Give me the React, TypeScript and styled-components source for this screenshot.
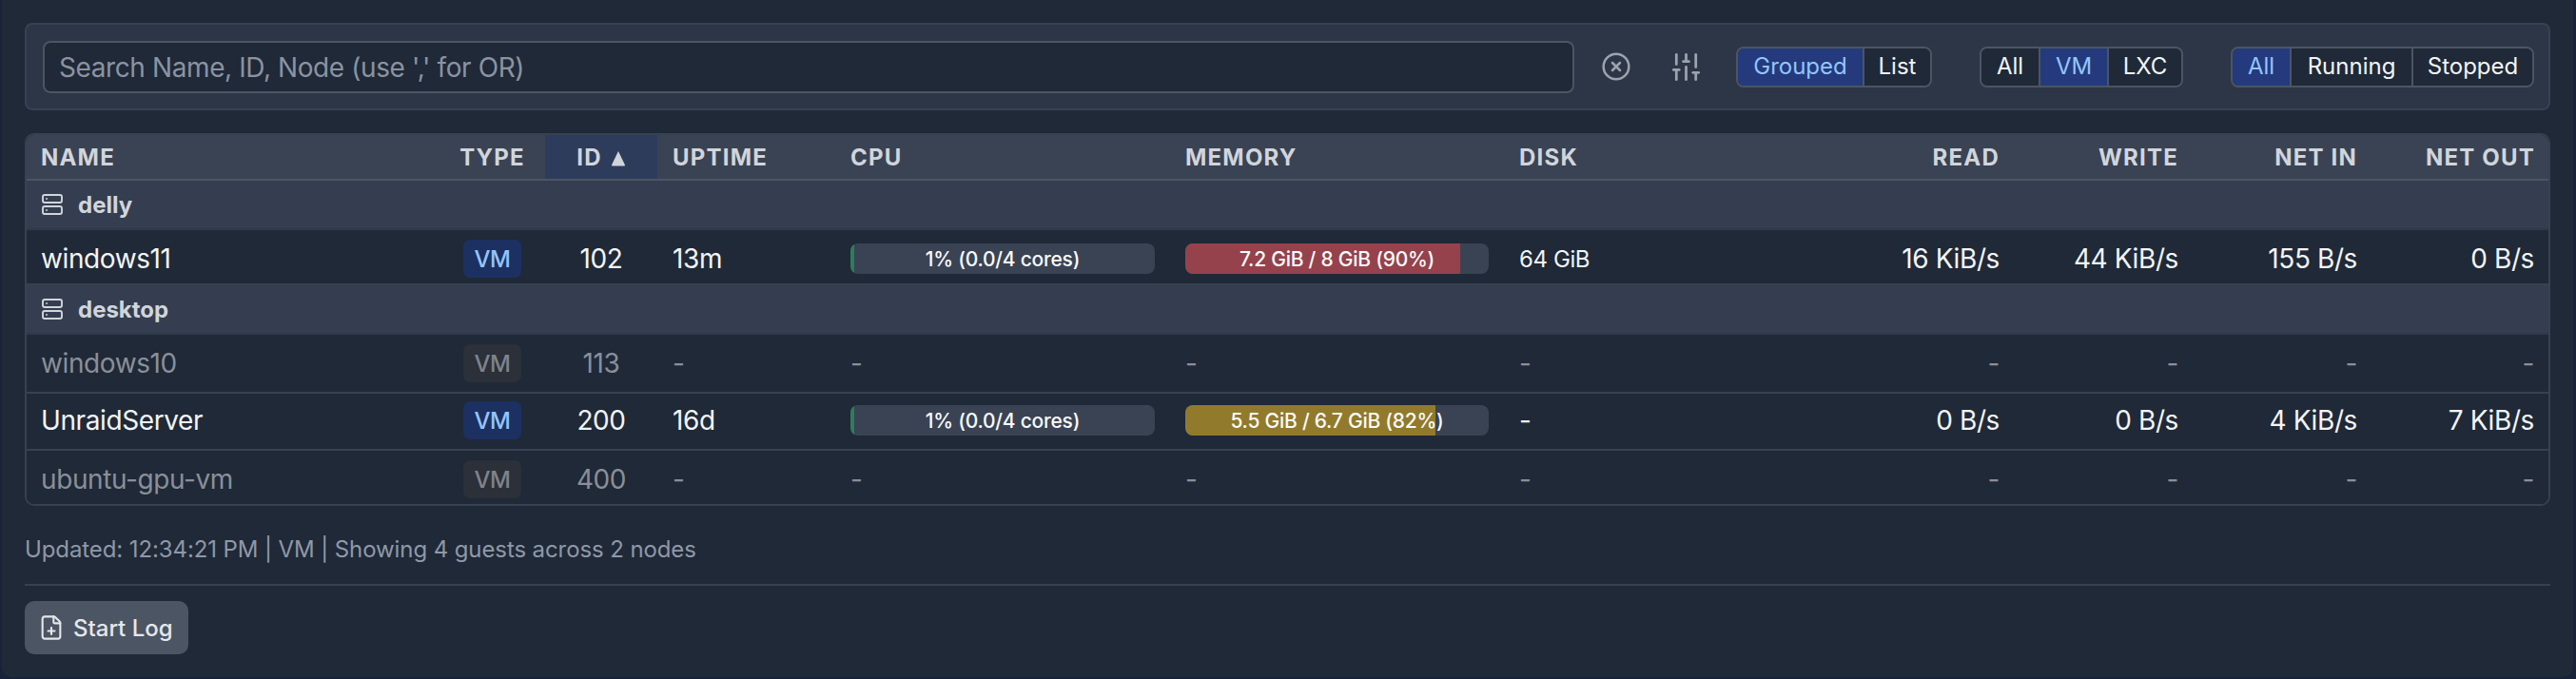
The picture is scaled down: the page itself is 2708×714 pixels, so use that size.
import React from "react";
import styled, { createGlobalStyle } from "styled-components";
import { CircleX, FilePlus, Server, SlidersVertical } from "lucide-react";

const Global = createGlobalStyle`
  html, body { margin: 0; padding: 0; height: 714px; overflow: hidden; background: #18233a; }
  body { font-family: Inter, "Noto Sans", sans-serif; }
`;

const Panel = styled.div`
  box-sizing: border-box;
  margin: 0 3px 0 2px;
  height: 712px;
  padding: 24px 24px 0;
  background: #1f2937;
  border-radius: 0 0 10px 10px;
`;

const Toolbar = styled.div`
  box-sizing: border-box;
  display: flex;
  align-items: center;
  height: 92px;
  padding: 0 15px 0 17px;
  background: #2d3646;
  border: 2px solid #374151;
  border-radius: 8px;
`;

const Search = styled.input`
  box-sizing: border-box;
  flex: 1;
  min-width: 0;
  height: 55px;
  padding: 2px 15px 0;
  background: #1f2937;
  border: 2px solid #4b5563;
  border-radius: 8px;
  color: #e5e7eb;
  font: 400 28px Inter, sans-serif;
  letter-spacing: -0.4px;
  &::placeholder { color: #8b93a1; opacity: 1; }
`;

const IconButton = styled.button<{ $ml: number; $w: number }>`
  display: flex;
  align-items: center;
  justify-content: center;
  flex: none;
  width: ${(p) => p.$w}px;
  height: 40px;
  margin-left: ${(p) => p.$ml}px;
  padding: 0;
  background: none;
  border: 0;
  color: #9ca3af;
`;

const Segments = styled.div<{ $ml: number }>`
  display: flex;
  flex: none;
  height: 43px;
  box-sizing: border-box;
  margin-left: ${(p) => p.$ml}px;
  border: 2px solid #4b5563;
  border-radius: 8px;
  overflow: hidden;
`;

const Segment = styled.div<{ $on?: boolean; $w: number }>`
  display: flex;
  align-items: center;
  justify-content: center;
  box-sizing: border-box;
  width: ${(p) => p.$w}px;
  padding-bottom: 2px;
  font-size: 24px;
  font-weight: 400;
  color: ${(p) => (p.$on ? "#93c5fd" : "#f3f4f6")};
  background: ${(p) => (p.$on ? "#243a7c" : "#1f2937")};
  & + & { border-left: 2px solid #4b5563; }
`;

const TableFrame = styled.div`
  margin-top: 24px;
  border: 2px solid #374151;
  border-radius: 10px;
  overflow: hidden;
`;

const Table = styled.table`
  width: 100%;
  table-layout: fixed;
  border-collapse: separate;
  border-spacing: 0;
  background: #1f2937;
`;

const HeadCell = styled.th<{ $align?: string; $sorted?: boolean }>`
  box-sizing: border-box;
  height: 48px;
  padding: 0 16px;
  text-align: ${(p) => p.$align ?? "left"};
  font-size: 24px;
  font-weight: 700;
  letter-spacing: 1.2px;
  white-space: nowrap;
  color: #d1d5db;
  background: ${(p) => (p.$sorted ? "#2e3c5c" : "#3a4354")};
  border-bottom: 2px solid #4b5563;
  &:first-child { padding-left: 15px; }
  &:last-child { padding-right: 14px; }
`;

const SortMark = styled.svg`
  display: inline-block;
  width: 16px;
  height: 17px;
  margin-left: 9px;
  vertical-align: -1px;
  fill: #d1d5db;
`;

const GroupRow = styled.tr``;

const GroupCell = styled.td`
  box-sizing: border-box;
  height: 52px;
  padding: 0 16px;
  background: #343e50;
  border-bottom: 2px solid #303949;
`;

const GroupLabel = styled.div`
  display: flex;
  align-items: center;
  gap: 15px;
  font-size: 24px;
  font-weight: 700;
  color: #d1d5db;
  svg { margin-left: -1px; }
`;

const Row = styled.tr<{ $h: number; $dim?: boolean }>`
  height: ${(p) => p.$h}px;
  color: ${(p) => (p.$dim ? "#8a8f99" : "#f3f4f6")};
`;

const Cell = styled.td<{ $align?: string; $last?: boolean; $size?: number; $nudge?: number }>`
  box-sizing: border-box;
  padding: ${(p) => Math.max(p.$nudge ?? 0, 0)}px 16px ${(p) => Math.max(-(p.$nudge ?? 0), 0)}px;
  font-size: ${(p) => p.$size ?? 28}px;
  letter-spacing: -0.4px;
  text-align: ${(p) => p.$align ?? "left"};
  white-space: nowrap;
  overflow: visible;
  border-bottom: ${(p) => (p.$last ? "0" : "2px solid #374151")};
  &:first-child { padding-left: 15px; }
  &:last-child { padding-right: 15px; }
`;

const TypeBadge = styled.span<{ $dim?: boolean }>`
  display: inline-flex;
  align-items: center;
  justify-content: center;
  width: 61px;
  height: 40px;
  vertical-align: middle;
  border-radius: 7px;
  font-size: 24px;
  font-weight: 500;
  color: ${(p) => (p.$dim ? "#7f838b" : "#93c5fd")};
  background: ${(p) => (p.$dim ? "#2b3039" : "#1d3062")};
`;

const Bar = styled.div`
  position: relative;
  height: 32px;
  background: #3a4354;
  border-radius: 8px;
  overflow: hidden;
`;

const BarFill = styled.div<{ $c: string }>`
  height: 100%;
  background: ${(p) => p.$c};
`;

const BarLabel = styled.div`
  position: absolute;
  inset: 0;
  display: flex;
  align-items: center;
  justify-content: center;
  font-size: 21px;
  font-weight: 500;
  letter-spacing: -0.25px;
  color: #f9fafb;
`;

const Status = styled.div`
  margin-top: 30px;
  font-size: 24px;
  line-height: 32px;
  letter-spacing: -0.1px;
  color: #8f98a8;
`;

const Rule = styled.div`
  margin-top: 20px;
  height: 2px;
  background: #374151;
`;

const LogButton = styled.button`
  display: flex;
  align-items: center;
  gap: 9px;
  box-sizing: border-box;
  width: 172px;
  height: 56px;
  margin-top: 16px;
  padding: 0 0 0 14px;
  background: #4b5563;
  border: 0;
  border-radius: 10px;
  color: #e5e7eb;
  font: 500 24px Inter, sans-serif;
`;

const widths = [434, 111, 118, 187, 352, 351, 319, 218, 188, 188, 185];

const heads: [string, string?, boolean?][] = [
  ["NAME"], ["TYPE", "center"], ["ID", "center", true], ["UPTIME"], ["CPU"], ["MEMORY"], ["DISK"],
  ["READ", "right"], ["WRITE", "right"], ["NET IN", "right"], ["NET OUT", "right"],
];

type Guest = {
  name: string; id: number; h: number; nudge: number; dim?: boolean; last?: boolean; uptime?: string;
  cpu?: string; cpuPct?: number; mem?: string; memPct?: number; memColor?: string; disk?: string;
  io?: string[];
};

const groups: { node: string; guests: Guest[] }[] = [
  {
    node: "delly",
    guests: [
      { name: "windows11", id: 102, h: 58, nudge: 4, uptime: "13m", cpu: "1% (0.0/4 cores)", cpuPct: 1.2,
        mem: "7.2 GiB / 8 GiB (90%)", memPct: 90.5, memColor: "#95424c", disk: "64 GiB",
        io: ["16 KiB/s", "44 KiB/s", "155 B/s", "0 B/s"] },
    ],
  },
  {
    node: "desktop",
    guests: [
      { name: "windows10", id: 113, h: 62, nudge: 0, dim: true },
      { name: "UnraidServer", id: 200, h: 60, nudge: -2, uptime: "16d", cpu: "1% (0.0/4 cores)", cpuPct: 1.2,
        mem: "5.5 GiB / 6.7 GiB (82%)", memPct: 82.4, memColor: "#917a2c", disk: "-",
        io: ["0 B/s", "0 B/s", "4 KiB/s", "7 KiB/s"] },
      { name: "ubuntu-gpu-vm", id: 400, h: 56, nudge: 4, dim: true, last: true },
    ],
  },
];

function Meter({ pct, color, label }: { pct: number; color: string; label: string }) {
  return (
    <Bar>
      <BarFill $c={color} style={{ width: `${pct}%` }} />
      <BarLabel>{label}</BarLabel>
    </Bar>
  );
}

function GuestRow({ g }: { g: Guest }) {
  const io = g.io ?? ["-", "-", "-", "-"];
  const cell = { $last: g.last, $nudge: g.nudge };
  return (
    <Row $h={g.h} $dim={g.dim}>
      <Cell {...cell}>{g.name}</Cell>
      <Cell {...cell} $align="center"><TypeBadge $dim={g.dim}>VM</TypeBadge></Cell>
      <Cell {...cell} $align="center">{g.id}</Cell>
      <Cell {...cell}>{g.uptime ?? "-"}</Cell>
      <Cell {...cell}>{g.cpu ? <Meter pct={g.cpuPct!} color="#2f7d5b" label={g.cpu} /> : "-"}</Cell>
      <Cell {...cell}>{g.mem ? <Meter pct={g.memPct!} color={g.memColor!} label={g.mem} /> : "-"}</Cell>
      <Cell {...cell} $size={g.disk && g.disk !== "-" ? 24 : 28}>{g.disk ?? "-"}</Cell>
      {io.map((v, i) => (
        <Cell {...cell} $align="right" key={i}>{v}</Cell>
      ))}
    </Row>
  );
}

export default function App() {
  return (
    <>
      <Global />
      <Panel>
        <Toolbar>
          <Search placeholder="Search Name, ID, Node (use ',' for OR)" />
          <IconButton $ml={27} $w={34}><CircleX size={32} strokeWidth={1.9} /></IconButton>
          <IconButton $ml={38} $w={36}><SlidersVertical size={35} strokeWidth={1.9} /></IconButton>
          <Segments $ml={35}>
            <Segment $on $w={131}>Grouped</Segment>
            <Segment $w={71}>List</Segment>
          </Segments>
          <Segments $ml={50}>
            <Segment $w={60}>All</Segment>
            <Segment $on $w={72}>VM</Segment>
            <Segment $w={78}>LXC</Segment>
          </Segments>
          <Segments $ml={50}>
            <Segment $on $w={60}>All</Segment>
            <Segment $w={128}>Running</Segment>
            <Segment $w={127}>Stopped</Segment>
          </Segments>
        </Toolbar>
        <TableFrame>
          <Table>
            <colgroup>
              {widths.map((w, i) => <col key={i} width={w} />)}
            </colgroup>
            <thead>
              <tr>
                {heads.map(([t, a, s]) => (
                  <HeadCell key={t} $align={a} $sorted={s}>
                    {t}
                    {s && (
                      <SortMark viewBox="0 0 16 17"><path d="M8 1 L15 15.5 Q15.2 16.5 14 16.5 L2 16.5 Q.8 16.5 1 15.5 Z" /></SortMark>
                    )}
                  </HeadCell>
                ))}
              </tr>
            </thead>
            <tbody>
              {groups.map((gr) => (
                <React.Fragment key={gr.node}>
                  <GroupRow>
                    <GroupCell colSpan={11}>
                      <GroupLabel><Server size={24} strokeWidth={1.9} />{gr.node}</GroupLabel>
                    </GroupCell>
                  </GroupRow>
                  {gr.guests.map((g) => <GuestRow key={g.id} g={g} />)}
                </React.Fragment>
              ))}
            </tbody>
          </Table>
        </TableFrame>
        <Status>Updated: 12:34:21 PM | VM | Showing 4 guests across 2 nodes</Status>
        <Rule />
        <LogButton><FilePlus size={28} strokeWidth={1.8} />Start Log</LogButton>
      </Panel>
    </>
  );
}
